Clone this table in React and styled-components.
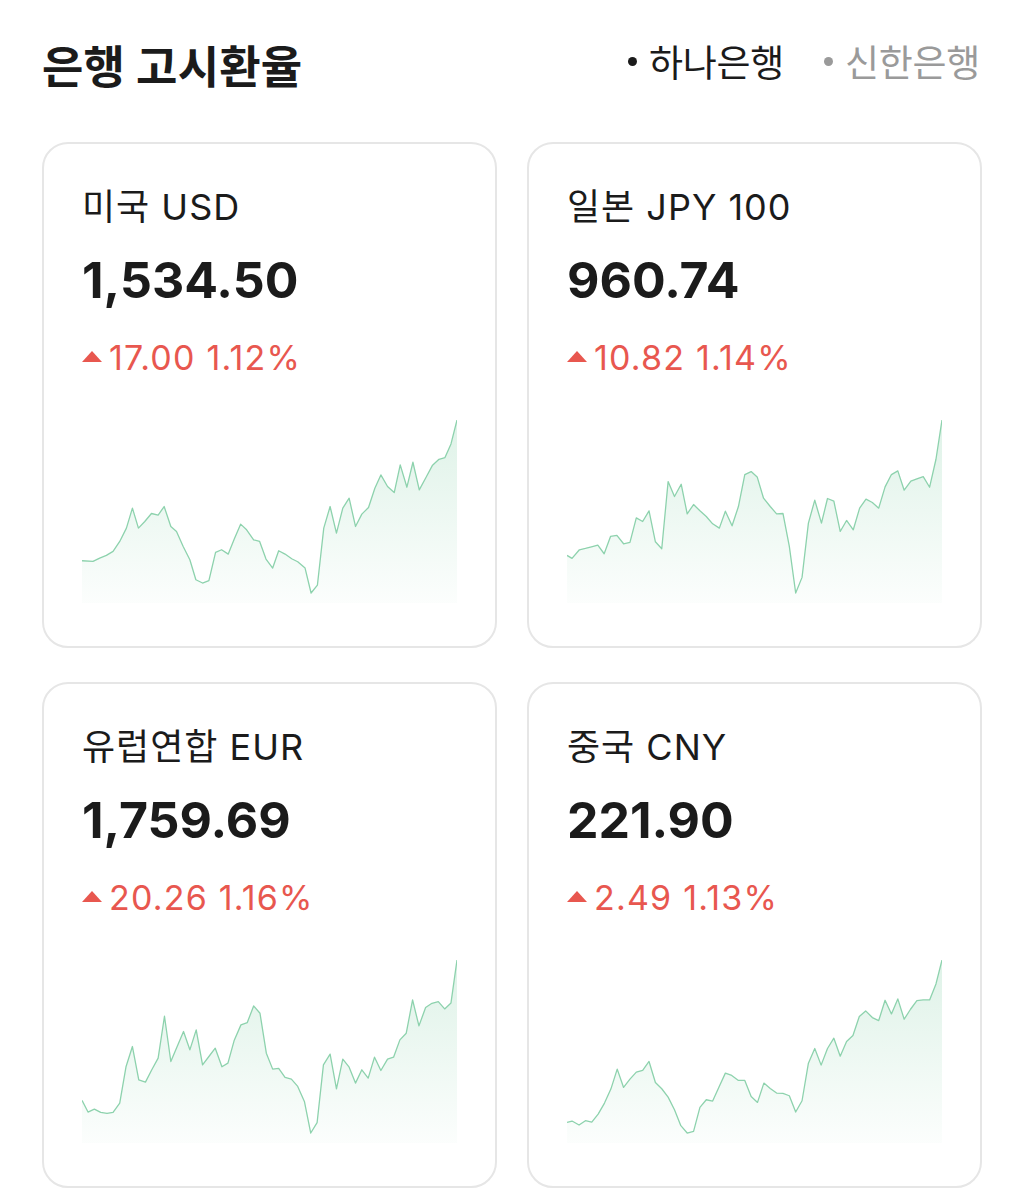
import React from 'react';
import styled, { createGlobalStyle } from 'styled-components';

const Global = createGlobalStyle`
  body { margin:0; background:#fff; font-family: Inter, "Noto Sans CJK KR", sans-serif; color:#1b1b1b; }
`;

const Page = styled.div`
  padding:36px 42px 12px; width:1024px; box-sizing:border-box;
`;

const Header = styled.header`
  display:flex; align-items:center; justify-content:space-between; height:56px; margin-bottom:50px;
`;

const Title = styled.h1`
  margin:0; font-size:45px; font-weight:700; letter-spacing:0.2px; color:#1b1b1b;
`;

const Tabs = styled.div`
  display:flex; gap:40px; padding-right:2px; margin-top:-6px;
`;

const Tab = styled.button`
  display:flex; align-items:center; gap:12px; border:none; background:none; padding:0;
  font-family:inherit; font-size:37px; font-weight:400; letter-spacing:-0.3px; color:${p=>p.active?'#1b1b1b':'#9a9a9a'};
  &::before { content:''; width:9px; height:9px; border-radius:5px; background:currentColor; }
`;

const Grid = styled.div`
  display:grid; grid-template-columns:455px 455px; column-gap:30px; row-gap:34px;
`;

const Card = styled.div`
  box-sizing:border-box; height:506px; border:2px solid #e6e6e6; border-radius:26px;
  padding:43px 38px 0;
`;

const Label = styled.div`
  font-size:36px; line-height:40px; font-weight:400; letter-spacing:1px; color:#1b1b1b;
`;

const Rate = styled.div`
  margin-top:25px; font-size:50px; line-height:56px; font-weight:700; letter-spacing:0;
`;

const Change = styled.div`
  margin-top:30px; display:flex; align-items:center; gap:7px; font-size:34px; line-height:40px; letter-spacing:1.2px; color:#e8574f;
  &::before { content:''; width:0; height:0; border-left:10px solid transparent; border-right:10px solid transparent; border-bottom:11px solid #e8574f; margin-top:-3px; }
`;

const Chart = styled.svg`
  display:block; margin-top:42px; width:375px; height:183px;
`;

const data = [
  {label:'미국 USD', rate:'1,534.50', diff:'17.00', pct:'1.12%', x0:127, pts:[[127,483],[160,485],[180,475],[200,467],[220,455],[240,425],[260,385],[278,325],[296,385],[315,365],[335,341],[355,346],[373,320],[393,380],[410,395],[430,440],[450,480],[468,540],[488,550],[507,543],[527,458],[545,450],[565,463],[583,418],[602,373],[620,390],[641,420],[659,425],[678,478],[698,505],[716,453],[735,463],[755,477],[773,486],[795,505],[813,580],[832,556],[851,385],[870,320],[889,400],[908,325],[927,295],[946,380],[965,343],[985,323],[1004,265],[1022,225],[1042,260],[1062,278],[1080,195],[1100,262],[1118,187],[1137,270],[1157,233],[1176,197],[1196,178],[1214,173],[1232,132],[1250,60]]},
  {label:'일본 JPY 100', rate:'960.74', diff:'10.82', pct:'1.14%', x0:85, pts:[[85,467],[100,476],[122,450],[140,446],[158,441],[177,436],[196,462],[215,410],[234,407],[254,432],[273,428],[292,354],[311,365],[330,333],[349,426],[368,447],[387,245],[406,290],[426,253],[444,342],[463,314],[482,333],[501,350],[520,372],[540,385],[558,334],[578,378],[597,320],[616,224],[635,215],[653,231],[672,295],[692,320],[711,342],[730,341],[749,440],[768,580],[787,533],[806,370],[825,301],[845,370],[863,296],[882,304],[901,395],[920,362],[940,390],[959,325],[978,298],[997,308],[1016,325],[1035,261],[1054,224],[1073,213],[1092,271],[1112,244],[1130,237],[1149,230],[1168,262],[1187,178],[1205,60]]},
  {label:'유럽연합 EUR', rate:'1,759.69', diff:'20.26', pct:'1.16%', x0:67, pts:[[67,482],[85,517],[104,508],[123,518],[142,521],[160,518],[180,490],[199,380],[218,320],[237,420],[257,427],[276,390],[295,355],[314,229],[333,365],[352,320],[371,275],[390,330],[409,270],[428,375],[447,350],[466,325],[486,381],[504,370],[523,301],[543,255],[562,248],[581,198],[600,220],[619,340],[638,388],[656,386],[675,413],[694,418],[713,440],[733,485],[752,580],[771,549],[790,375],[810,343],[829,447],[848,358],[867,382],[886,430],[905,390],[924,415],[943,352],[962,392],[982,358],[1000,352],[1019,300],[1038,280],[1057,180],[1076,258],[1096,203],[1115,190],[1134,185],[1153,207],[1172,189],[1190,60]]},
  {label:'중국 CNY', rate:'221.90', diff:'2.49', pct:'1.13%', x0:85, pts:[[85,548],[100,544],[121,556],[140,543],[159,547],[178,523],[197,490],[216,448],[235,388],[254,443],[273,418],[292,397],[311,392],[330,365],[349,428],[368,447],[387,472],[406,510],[425,558],[444,580],[463,575],[482,503],[501,480],[520,484],[539,442],[558,400],[577,407],[597,422],[616,422],[635,470],[654,488],[673,430],[692,446],[711,460],[730,461],[749,468],[768,517],[787,483],[806,370],[825,326],[844,376],[863,326],[882,295],[901,349],[920,305],[939,287],[958,230],[977,213],[997,233],[1016,242],[1035,181],[1054,222],[1073,177],[1092,238],[1111,208],[1130,182],[1149,180],[1168,180],[1187,132],[1205,60]]},
];

function Spark({pts, x0, id}){
  const last = pts[pts.length-1][0];
  const line = pts.map((p,i)=>`${i?'L':'M'}${p[0]} ${p[1]}`).join(' ');
  const area = `${line} L${last} 610 L${x0} 610 Z`;
  return (
    <Chart viewBox={`${x0} 60 ${last-x0} 550`} preserveAspectRatio="none">
      <defs>
        <linearGradient id={id} x1="0" y1="0" x2="0" y2="1">
          <stop offset="0%" stopColor="#5cbf8a" stopOpacity="0.2" />
          <stop offset="100%" stopColor="#5cbf8a" stopOpacity="0.02" />
        </linearGradient>
      </defs>
      <path d={area} fill={`url(#${id})`} />
      <path d={line} fill="none" stroke="#8dd2ad" strokeWidth="1.3" vectorEffect="non-scaling-stroke" strokeLinejoin="round" />
    </Chart>
  );
}

export default function App(){
  return (
    <Page>
      <Global />
      <Header>
        <Title>은행 고시환율</Title>
        <Tabs>
          <Tab active>하나은행</Tab>
          <Tab>신한은행</Tab>
        </Tabs>
      </Header>
      <Grid>
        {data.map((d,i)=>(
          <Card key={i}>
            <Label>{d.label}</Label>
            <Rate>{d.rate}</Rate>
            <Change>{d.diff} {d.pct}</Change>
            <Spark pts={d.pts} x0={d.x0} id={`g${i}`} />
          </Card>
        ))}
      </Grid>
    </Page>
  );
}
